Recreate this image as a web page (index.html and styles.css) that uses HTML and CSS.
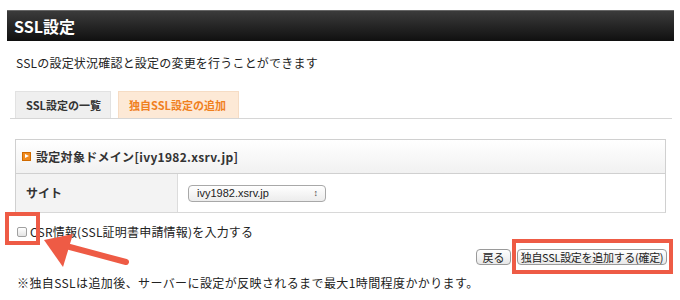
FILE: index.html
```html
<!DOCTYPE html>
<html lang="ja">
<head>
<meta charset="utf-8">
<link rel="stylesheet" href="styles.css">
</head>
<body>
<div class="page">
  <div class="titlebar"><h1>SSL設定</h1></div>
  <p class="desc">SSLの設定状況確認と設定の変更を行うことができます</p>
  <div class="tabs">
    <div class="tab">SSL設定の一覧</div>
    <div class="tab active">独自SSL設定の追加</div>
  </div>
  <div class="panel">
    <div class="panel-head"><span class="sq"></span>設定対象ドメイン[ivy1982.xsrv.jp]</div>
    <div class="row">
      <div class="label">サイト</div>
      <div class="value">
        <div class="select"><span>ivy1982.xsrv.jp</span><span class="updown">&#x2195;</span></div>
      </div>
    </div>
  </div>
  <div class="check-row">
    <span class="checkbox"></span>
    <span>CSR情報(SSL証明書申請情報)を入力する</span>
  </div>
  <div class="actions">
    <button class="btn back">戻る</button>
    <button class="btn main">独自SSL設定を追加する(確定)</button>
  </div>
  <p class="note">※独自SSLは追加後、サーバーに設定が反映されるまで最大1時間程度かかります。</p>

  <div class="mark mark-check"></div>
  <div class="mark mark-btn"></div>
  <svg class="arrow" width="90" height="34" viewBox="0 0 90 34">
    <path d="M86 28 L26 12" stroke="#ee5b45" stroke-width="6" stroke-linecap="round" fill="none"/>
    <path d="M2 3 L31 -3 L21 30 Z" fill="#ee5b45" transform="translate(2,3)"/>
  </svg>
</div>
</body>
</html>
```
FILE: styles.css
```css
* { box-sizing: border-box; }
body {
  margin: 0;
  background: #fff;
  font-family: "Noto Sans CJK JP", "Noto Sans", sans-serif;
  color: #222;
  font-size: 12px;
  line-height: 16px;
}
.page {
  position: relative;
  width: 680px;
  height: 300px;
  padding: 10px 0 0 0;
  overflow: hidden;
}
.titlebar {
  margin: 0 6px 0 7px;
  height: 31px;
  background: linear-gradient(#3b3b3b, #101010);
  border-top: 1px solid #666;
  display: flex;
  align-items: center;
  padding-left: 7px;
}
.titlebar h1 {
  margin: 0;
  color: #fff;
  font-size: 16px;
  font-weight: bold;
  line-height: 20px;
}
.desc {
  margin: 14px 0 0 16px;
  font-size: 12px;
  line-height: 16px;
  color: #222;
  letter-spacing: 0.2px;
}
.tabs {
  margin: 20px 8px 0 10px;
  padding-left: 5px;
  display: flex;
  gap: 7px;
  border-bottom: 1px solid #d6d6d6;
  height: 28px;
  align-items: flex-end;
}
.tab {
  height: 27px;
  padding: 0 9px 0 10px;
  background: #efefef;
  border: 1px solid #e2e2e2;
  border-bottom: none;
  font-size: 11px;
  font-weight: bold;
  color: #333;
  display: flex;
  align-items: center;
}
.tab.active {
  background: #fde9d6;
  border-color: #f6dcc4;
  color: #f0801e;
  width: 121px;
  padding-left: 10px;
}
.tab:first-child { width: 96px; }
.panel {
  margin: 20px 14px 0 15px;
  border: 1px solid #d0d0d0;
  border-bottom: 1px solid #d8d8d8;
}
.panel-head {
  height: 34px;
  background: linear-gradient(#ffffff, #f1f1f1);
  border-bottom: 1px solid #d0d0d0;
  display: flex;
  align-items: center;
  padding-left: 6px;
  font-weight: bold;
  font-size: 12px;
  color: #333;
  letter-spacing: 0.3px;
}
.sq {
  width: 9px;
  height: 9px;
  background: #f08a1e;
  border: 1px solid #d06a00;
  margin-right: 5px;
  position: relative;
}
.sq::after {
  content: "";
  position: absolute;
  left: 2px; top: 1px;
  border-left: 4px solid #fff;
  border-top: 2.5px solid transparent;
  border-bottom: 2.5px solid transparent;
}
.row {
  display: flex;
  height: 38px;
}
.label {
  width: 162px;
  background: #f3f3f3;
  border-right: 1px solid #dcdcdc;
  font-weight: bold;
  font-size: 12px;
  display: flex;
  align-items: center;
  padding-left: 10px;
  color: #333;
}
.value {
  display: flex;
  align-items: center;
  padding-left: 10px;
}
.select {
  width: 138px;
  height: 17px;
  border: 1px solid #a8a8a8;
  border-radius: 4px;
  background: linear-gradient(#ffffff, #ececec);
  display: flex;
  align-items: center;
  justify-content: space-between;
  padding: 0 7px 0 8px;
  font-size: 11px;
  color: #222;
  font-family: "Liberation Sans", "Noto Sans", sans-serif;
}
.updown { font-size: 9px; color: #444; }
.check-row {
  display: flex;
  align-items: center;
  margin: 11px 0 0 17px;
  gap: 3px;
  font-size: 12px;
  color: #222;
  letter-spacing: 0.2px;
}
.checkbox {
  width: 10px;
  height: 10px;
  border: 1px solid #a0a0a0;
  border-radius: 2px;
  background: linear-gradient(#fff, #e4e4e4);
}
.actions {
  display: flex;
  justify-content: flex-end;
  gap: 6px;
  margin: 9px 13px 0 0;
}
.btn {
  font-family: "Noto Sans CJK JP", sans-serif;
  font-size: 11px;
  line-height: 13px;
  height: 16px;
  padding: 0;
  white-space: nowrap;
  border: 1px solid #9a9a9a;
  border-radius: 4px;
  background: linear-gradient(#ffffff, #e8e8e8);
  color: #222;
}
.btn.back { width: 35px; }
.btn.main { width: 150px; letter-spacing: -0.3px; }
.note {
  margin: 10px 0 0 17px;
  font-size: 12px;
  line-height: 16px;
  letter-spacing: 0.4px;
}
.mark {
  position: absolute;
  border: 4px solid #ee5b45;
}
.mark-check { left: 5px; top: 212px; width: 35px; height: 33px; }
.mark-btn { left: 512px; top: 239px; width: 161px; height: 35px; }
.arrow { position: absolute; left: 40px; top: 234px; }
```
